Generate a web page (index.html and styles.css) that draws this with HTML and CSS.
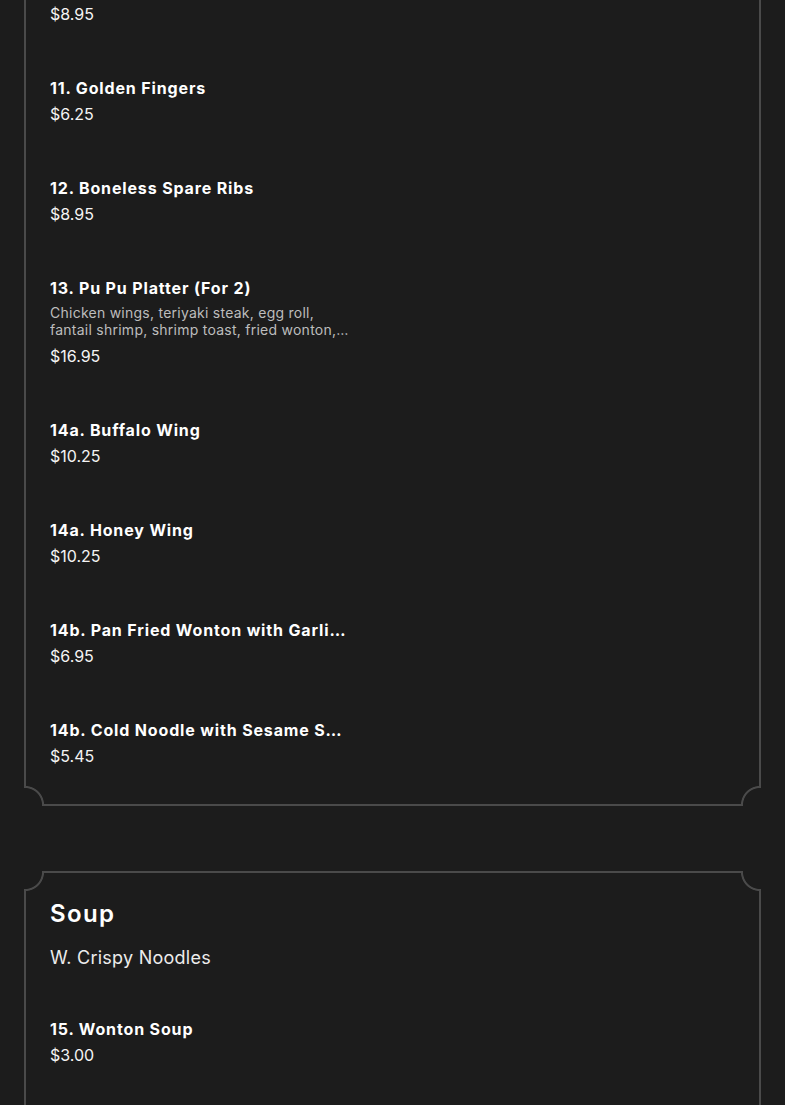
FILE: index.html
```html
<!DOCTYPE html>
<html lang="en">
<head>
<meta charset="utf-8">
<title>Menu</title>
<link rel="stylesheet" href="styles.css">
</head>
<body>
<main class="menu">
  <section class="card card-first">
    <span class="corner tl"></span><span class="corner tr"></span>
    <span class="corner bl"></span><span class="corner br"></span>
    <ul class="items">
      <li class="item">
        <div class="item-name">10. Chicken Wings</div>
        <div class="item-price">$8.95</div>
      </li>
      <li class="item">
        <div class="item-name">11. Golden Fingers</div>
        <div class="item-price">$6.25</div>
      </li>
      <li class="item">
        <div class="item-name">12. Boneless Spare Ribs</div>
        <div class="item-price">$8.95</div>
      </li>
      <li class="item">
        <div class="item-name">13. Pu Pu Platter (For 2)</div>
        <div class="item-desc">Chicken wings, teriyaki steak, egg roll, fantail shrimp, shrimp toast, fried wonton, golden fingers and spare ribs</div>
        <div class="item-price">$16.95</div>
      </li>
      <li class="item">
        <div class="item-name">14a. Buffalo Wing</div>
        <div class="item-price">$10.25</div>
      </li>
      <li class="item">
        <div class="item-name">14a. Honey Wing</div>
        <div class="item-price">$10.25</div>
      </li>
      <li class="item">
        <div class="item-name">14b. Pan Fried Wonton with Garlic Sauce</div>
        <div class="item-price">$6.95</div>
      </li>
      <li class="item">
        <div class="item-name">14b. Cold Noodle with Sesame Sauce</div>
        <div class="item-price">$5.45</div>
      </li>
    </ul>
  </section>

  <section class="card">
    <span class="corner tl"></span><span class="corner tr"></span>
    <span class="corner bl"></span><span class="corner br"></span>
    <h2 class="card-title">Soup</h2>
    <p class="card-subtitle">W. Crispy Noodles</p>
    <ul class="items">
      <li class="item">
        <div class="item-name">15. Wonton Soup</div>
        <div class="item-price">$3.00</div>
      </li>
      <li class="item">
        <div class="item-name">16. Egg Drop Soup</div>
        <div class="item-price">$3.00</div>
      </li>
    </ul>
  </section>
</main>
</body>
</html>
```
FILE: styles.css
```css
html, body {
  margin: 0;
  padding: 0;
  background: #1c1c1c;
}

body {
  font-family: Inter, "Open Sans", "Liberation Sans", sans-serif;
  color: #ffffff;
  overflow: hidden;
}

.menu {
  display: flex;
  flex-direction: column;
  gap: 65px;
  padding: 0 24px;
  margin-top: -52px;
}

.card {
  position: relative;
  border: 2px solid #4a4a4a;
  padding: 26px 24px 36px;
  background: #1c1c1c;
}

.corner {
  position: absolute;
  width: 21px;
  height: 21px;
}

.corner.tl {
  left: -2px;
  top: -2px;
  background: radial-gradient(circle at 1px 1px, #1c1c1c 16.6px, #4a4a4a 17.4px, #4a4a4a 18.6px, rgba(28,28,28,0) 19.4px);
}
.corner.tr {
  right: -2px;
  top: -2px;
  background: radial-gradient(circle at calc(100% - 1px) 1px, #1c1c1c 16.6px, #4a4a4a 17.4px, #4a4a4a 18.6px, rgba(28,28,28,0) 19.4px);
}
.corner.bl {
  left: -2px;
  bottom: -2px;
  background: radial-gradient(circle at 1px calc(100% - 1px), #1c1c1c 16.6px, #4a4a4a 17.4px, #4a4a4a 18.6px, rgba(28,28,28,0) 19.4px);
}
.corner.br {
  right: -2px;
  bottom: -2px;
  background: radial-gradient(circle at calc(100% - 1px) calc(100% - 1px), #1c1c1c 16.6px, #4a4a4a 17.4px, #4a4a4a 18.6px, rgba(28,28,28,0) 19.4px);
}

.card-title {
  margin: 0 0 16px;
  font-size: 24px;
  line-height: 30px;
  font-weight: 600;
  letter-spacing: 1.4px;
}

.card-subtitle {
  margin: 0 0 46px;
  font-size: 18px;
  line-height: 26px;
  font-weight: 400;
  letter-spacing: 0.25px;
  color: #ececec;
}

.items {
  list-style: none;
  margin: 0;
  padding: 0;
  display: flex;
  flex-direction: column;
  gap: 50px;
}

.item {
  width: 300px;
  display: flex;
  flex-direction: column;
}

.item-name {
  font-size: 16px;
  line-height: 24px;
  font-weight: 700;
  letter-spacing: 0.85px;
  white-space: nowrap;
  overflow: hidden;
  text-overflow: ellipsis;
}

.item-desc {
  margin: 4px 0 4px;
  font-size: 14px;
  line-height: 17px;
  letter-spacing: 0.25px;
  color: #bdbdbd;
  display: -webkit-box;
  -webkit-box-orient: vertical;
  -webkit-line-clamp: 2;
  overflow: hidden;
}

.item-price {
  margin-top: 2px;
  font-size: 16px;
  line-height: 24px;
  color: #f4f4f4;
}
```
